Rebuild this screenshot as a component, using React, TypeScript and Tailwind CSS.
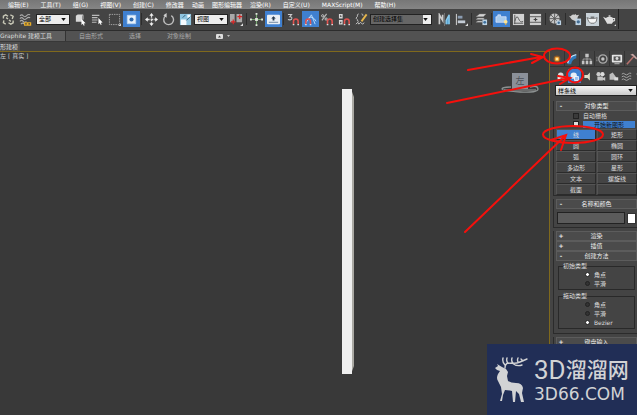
import type { ReactNode } from 'react';
import clsx from 'clsx';

const menus = [
  '编辑(E)', '工具(T)', '组(G)', '视图(V)', '创建(C)', '修改器', '动画',
  '图形编辑器', '渲染(R)', '自定义(U)', 'MAXScript(M)', '帮助(H)',
];

const shapeButtons = ['线', '矩形', '圆', '椭圆', '弧', '圆环', '多边形', '星形', '文本', '螺旋线', '截面'];

const magnet = (
  <>
    <path d="M7 12V9a2.5 2.5 0 0 1 5 0v3" fill="none" stroke="#e0524f" strokeWidth="1.7" />
    <path d="M6.2 12.5h1.7M11.2 12.5h1.7" stroke="#ddd" strokeWidth="1.4" />
  </>
);

const icons: Record<string, ReactNode> = {
  unlink: (
    <g fill="none" stroke="#c9c9b8" strokeWidth="1.5">
      <path d="M1.5 6V3.5L4 2l2.5 1.5M12 8v2.5L9.500 12 7 10.500M9 2l3 1.500-1 3M2 8l-.5 2.500L4 12M4.500 5l2 1.500M7.500 7.500l2 1.500" />
    </g>
  ),
  bind: (
    <>
      <path d="M1 3q2-2 3.500 0t3.500 0 4-1M1 6q2-2 3.500 0t3.500 0 4-1M1 9q2-2 3.500 0t3.500 0M2 12q2-2 4 0" fill="none" stroke="#aaa" strokeWidth="1.200" />
      <path d="M6 10.500h3v2.500H6zM9.500 10.500h3v2.500h-3z" fill="none" stroke="#e8ad28" strokeWidth="1.300" />
    </>
  ),
  pick: (
    <>
      <path d="M2 3l2-1.500h6L9 3.500v6H2z" fill="#d9d9d9" />
      <path d="M9 3.500l1.500-2V7H9z" fill="#999" />
      <path d="M8 6.500l4.500 4.500-2 .2 1 2-1 .5-1-2L8 13z" fill="#fff" />
    </>
  ),
  pickName: (
    <>
      <path d="M1 2.500h8M1 5h6M1 7.500h6M1 10h5" stroke="#bbb" strokeWidth="1.200" />
      <path d="M8 5.500l4.500 4.700-2 .2 1 2-1 .5-1-2L8 12z" fill="#fff" />
    </>
  ),
  region: (
    <>
      <path d="M1.500 1.500h11v11h-11z" fill="none" stroke="#aaa" strokeDasharray="1.500 1" />
      <path d="M14 11v3h-3z" fill="#ddd" />
    </>
  ),
  crossing: (
    <>
      <path d="M2.500 2.500h9v9h-9z" fill="#e8f2fb" stroke="#bcd7f2" />
      <circle cx="7" cy="7" r="2.200" fill="#2e69ad" />
    </>
  ),
  move: (
    <>
      <path d="M7 2v10M2 7h10" stroke="#ddd" strokeWidth="1.400" strokeDasharray="3 1" />
      <path d="M7 0l2.300 3H4.700zM7 14l2.300-3H4.700zM0 7l3-2.300v4.600zM14 7l-3-2.300v4.600z" fill="#f2f2f2" />
    </>
  ),
  rotate: (
    <>
      <path d="M4 3a5.300 5.300 0 1 0 6-.2" fill="none" stroke="#bdbdbd" strokeWidth="1.500" />
      <path d="M5 0v5L1.500 2.500z" fill="#d0d0d0" />
    </>
  ),
  scale: (
    <>
      <path d="M1 1h12v12H1z" fill="#8fc4df" />
      <path d="M2 7h6v6H2zM9 2h3v3H9z" fill="#f6fbff" />
      <path d="M4 5l3-3M8 8l4-4" stroke="#315d78" />
    </>
  ),
  pivot: (
    <>
      <path d="M0 1h5v9H0zM7 1h6v9H7z" fill="#a9a9a9" />
      <path d="M1 9.500h5M3.500 7v5M8 4h5M10.500 1.500v5" stroke="#d92525" strokeWidth="1.300" />
      <path d="M14 11v3h-3z" fill="#ddd" />
    </>
  ),
  manipulate: (
    <>
      <path d="M7 1v12M1 7h12" stroke="#77aa70" strokeWidth="1.200" />
      <path d="M5.500 5.500h3v3h-3zM6 0h2v2H6zM6 12h2v2H6zM0 6h2v2H0zM12 6h2v2h-2z" fill="#e0e6dc" />
    </>
  ),
  keyboard: (
    <>
      <rect x="0" y="2" width="14" height="10" rx="1" fill="#e9eff5" />
      <path d="M7 3.500L9.500 6H8v2H6V6H4.500z" fill="#25384d" />
      <path d="M2 10h10" stroke="#68809a" />
    </>
  ),
  snap3: (
    <>
      <path d="M1 1.500h4L3 4q3 0 2 2.500-1.500 1.500-4 .5" fill="none" stroke="#ccc" strokeWidth="1.100" />
      {magnet}
    </>
  ),
  snapAngle: (
    <>
      <path d="M1 12L8 2l4 10M5 5q5-2 8 4" fill="none" stroke="#bcdfff" />
      <g transform="translate(-5 0)">{magnet}</g>
    </>
  ),
  snapPercent: (
    <>
      <path d="M1 8l5-7" stroke="#bbb" strokeWidth="1.200" />
      <circle cx="1.800" cy="3" r="1.200" fill="none" stroke="#ccc" />
      <circle cx="5.500" cy="6.500" r="1.200" fill="none" stroke="#ccc" />
      {magnet}
    </>
  ),
  snapSpinner: (
    <>
      <path d="M1 1h4v5H1zM1 7.500h4v5H1z" fill="#d8d8d8" />
      <path d="M3 2l1 2H2zM3 11.500l1-2H2z" fill="#333" />
      {magnet}
    </>
  ),
  namedSets: (
    <>
      <path d="M4 1Q2 1 2.500 4L1 5.500 2.500 7Q2 9 4 9M7 1q2 0 1.500 2" fill="none" stroke="#c2c2c2" />
      <path d="M12.500 1.500L7 9" stroke="#e6b64c" strokeWidth="2" />
      <path d="M1 12l2-2 1 2 2-2 2 2 2-1.500" fill="none" stroke="#ccc" />
    </>
  ),
  mirror: (
    <>
      <path d="M1.500 12V2L5 8V2" fill="none" stroke="#ccc" strokeWidth="1.800" />
      <path d="M7 0v14" stroke="#777" />
      <path d="M12 12V2L8.800 8V12" fill="#5ba7d4" stroke="#8bcbed" strokeWidth="1.500" />
    </>
  ),
  align: (
    <>
      <path d="M1.500 1v12" stroke="#ddd" />
      <path d="M3 3h5v3H3z" fill="#8a9bb0" />
      <path d="M3 8h8v3H3z" fill="#c4ccd6" />
      <path d="M14 11v3h-3z" fill="#ddd" />
    </>
  ),
  layers: (
    <>
      <path d="M1 4l4-3h7L9 4zM1 7l2-1.500h7L9 7zM1 10l2-1.500h5V10z" fill="#d4d4d4" stroke="#777" strokeWidth=".5" />
      <path d="M8 7h5v6H8z" fill="#bcd3e5" />
      <circle cx="10.500" cy="10" r="1.500" fill="#3c6f9d" />
    </>
  ),
  ribbon: (
    <>
      <path d="M1 4h2V2h3v2h6v6H1z" fill="#a9cbed" stroke="#eef" strokeWidth=".7" />
      <circle cx="11.500" cy="9.500" r="2" fill="#ffe491" />
      <path d="M10.800 11.500h1.500V13h-1.500z" fill="#d9a542" />
    </>
  ),
  curves: (
    <>
      <path d="M1 1h12v12H1z" fill="#d2d2d2" />
      <path d="M3 2v10M2 11h10M3 9q2-8 4-3t5 3" fill="none" stroke="#555" />
    </>
  ),
  schematic: (
    <>
      <path d="M1 1h12v12H1z" fill="#cfcfcf" />
      <path d="M1 4h12M1 10h12" stroke="#555" />
      <path d="M7 5v4M5 7h4" stroke="#444" strokeWidth="1.300" />
    </>
  ),
  material: (
    <>
      <circle cx="6" cy="6" r="5.500" fill="#c4c4c4" />
      <path d="M2 2l8 8M6 0v12M0 6h12M10 2L2 10" stroke="#555" strokeWidth=".9" />
      <path d="M8 8h5v5H8z" fill="#bdd2e4" />
      <circle cx="10.500" cy="10.500" r="1.300" fill="#456e93" />
    </>
  ),
  renderSetup: (
    <>
      <path d="M0 3l2 .5Q3 1 6 2l1-1 1 1.500 3-.5-1.500 2Q9 8 7 9L3 7z" fill="#cfcfcf" />
      <path d="M7 6h6v7H7z" fill="#bdd2e4" />
      <circle cx="10" cy="9.500" r="1.800" fill="#456e93" />
    </>
  ),
  frameWindow: (
    <>
      <path d="M0 0h14v14H0z" fill="#c9d2d8" />
      <path d="M1 5l3 1h5l3-1-1 4-2 2H5L3 9z" fill="#f6f6f6" stroke="#555" strokeWidth=".8" />
      <path d="M5 4.500h4" stroke="#555" strokeWidth="1.200" />
    </>
  ),
  teapot: (
    <>
      <path d="M0 4l3 1.500Q5 4 7 4t4 1.500h2v3l-2 1-1.500 2h-5L3 9z" fill="#dedede" />
      <path d="M6 2.500h2V4H6z" fill="#dedede" />
      <path d="M11 6.500h1v1.300h-1z" fill="#444" />
      <path d="M14 12v2h-2z" fill="#ddd" />
    </>
  ),
  create: (
    <>
      <circle cx="7" cy="7" r="4" fill="#a9611d" opacity=".7" />
      <circle cx="7" cy="7" r="2.700" fill="#f5a93b" />
      <circle cx="7" cy="7" r="1.300" fill="#fff3b8" />
    </>
  ),
  modify: (
    <>
      <path d="M2 13Q3 4 12 2v4Q7 7 6 13z" fill="#2f79b8" />
      <path d="M2 12Q3 4 12 2" fill="none" stroke="#bfe2f7" strokeWidth="1.500" />
    </>
  ),
  hierarchy: (
    <>
      <path d="M5 1h4v4H5zM1 9h3v4H1zM5.500 9h3v4h-3zM10 9h3v4h-3z" fill="#c4c4c4" />
      <path d="M7 5v4M2.500 9V7h9v2" fill="none" stroke="#aaa" />
    </>
  ),
  motion: (
    <>
      <circle cx="8" cy="7" r="4.800" fill="none" stroke="#aaa" strokeWidth="1.600" />
      <circle cx="8" cy="7" r="2" fill="#c4c4c4" />
      <path d="M0 5h2M0 7h2M0 9h2" stroke="#888" />
    </>
  ),
  display: (
    <>
      <rect x="1" y="2" width="12" height="9" rx="1" fill="#e6e6e6" />
      <path d="M3 4h8v5H3z" fill="#555" />
      <circle cx="7" cy="6.500" r="1.700" fill="#ddd" />
      <path d="M4 12.500h6" stroke="#ccc" />
    </>
  ),
  utilities: (
    <>
      <path d="M1 13l8-9" stroke="#b5706c" strokeWidth="1.800" />
      <path d="M5 2l3-1 5 5-1 1.500-4-4z" fill="#c9a7a5" />
    </>
  ),
  geometry: (
    <>
      <circle cx="6" cy="5.500" r="3.500" fill="#ddd" />
      <path d="M7 7h6v5H7z" fill="#bbb" />
      <path d="M2 7h4v4H2z" fill="#e9e9e9" />
    </>
  ),
  shapes: (
    <>
      <circle cx="6" cy="6" r="4" fill="#e8eef5" />
      <path d="M7 7h5v5H7z" fill="#9dc2ee" stroke="#fff" />
    </>
  ),
  lights: <path d="M10 2v10L7 9H3V5h4z" fill="#dcdcc8" />,
  cameras: (
    <>
      <circle cx="4.500" cy="4" r="2.700" fill="#ccc" />
      <circle cx="9.500" cy="4" r="2.700" fill="#ddd" />
      <path d="M3 7h7v5H3zM10 9l3-1.500v5L10 11z" fill="#c4c4c4" />
    </>
  ),
  helpers: (
    <>
      <path d="M2 11V4l4-2 5 7v2z" fill="#bdbdbd" />
      <path d="M8 8h5v4H8z" fill="#ddd" />
    </>
  ),
  spacewarps: (
    <path d="M1 4q2-2 4 0t4 0 4-1M1 7.500q2-2 4 0t4 0 4-1M1 11q2-2 4 0t4 0 4-1" fill="none" stroke="#aaa" strokeWidth="1.200" />
  ),
  systems: <path d="M3 3l4 2 5-2-2 4 2 3-4-1-2 4-1-4z" fill="#ccc" />,
};

function IconButton({ name, label, active, size = 'bar' }: { name: string; label: string; active?: boolean; size?: 'bar' | 'tab' | 'sub' }) {
  return (
    <button
      type="button"
      aria-label={label}
      aria-pressed={active}
      className={clsx(
        'flex shrink-0 items-center justify-center',
        size === 'bar' && 'h-4 w-[17px]',
        size === 'tab' && 'h-4 w-[15px] border-r border-[#333]',
        size === 'sub' && 'h-[14px] w-[13px]',
        active && 'bg-[#3f80d0]',
      )}
    >
      <svg viewBox="0 0 14 14" className={size === 'bar' ? 'size-[13px]' : size === 'tab' ? 'size-3' : 'size-[11px]'}>
        {icons[name]}
      </svg>
    </button>
  );
}

function Divider() {
  return <span className="mx-px h-3 w-px shrink-0 bg-[#2c2c2c]" />;
}

function DropDown({ label, value, className }: { label: string; value: string; className: string }) {
  return (
    <div className={clsx('relative shrink-0', className)}>
      <select
        aria-label={label}
        className="block h-full w-full appearance-none overflow-hidden border border-[#222] bg-transparent pl-0.5 leading-[8px] text-black"
      >
        <option>{value}</option>
      </select>
      <svg viewBox="0 0 6 4" className="pointer-events-none absolute top-1 right-1 h-[3px] w-[5px]">
        <path d="M0 0h6L3 4z" fill="#111" />
      </svg>
    </div>
  );
}

function Toolbar() {
  return (
    <div className="flex h-[22px] items-center border-b border-[#2c2c2c] bg-[#444] pb-px">
      <IconButton name="unlink" label="断开链接" />
      <IconButton name="bind" label="绑定到空间扭曲" />
      <DropDown label="选择过滤器" value="全部" className="mx-0.5 h-[11px] w-[34px] bg-[#ededed]" />
      <IconButton name="pick" label="选择对象" />
      <IconButton name="pickName" label="按名称选择" />
      <IconButton name="region" label="矩形选择区域" />
      <IconButton name="crossing" label="窗口/交叉" active />
      <Divider />
      <IconButton name="move" label="移动" />
      <IconButton name="rotate" label="旋转" />
      <IconButton name="scale" label="缩放" />
      <DropDown label="参考坐标系" value="视图" className="h-[11px] w-[34px] bg-[#ededed]" />
      <IconButton name="pivot" label="轴点中心" />
      <Divider />
      <IconButton name="manipulate" label="操纵" />
      <IconButton name="keyboard" label="键盘快捷键" active />
      <Divider />
      <IconButton name="snap3" label="捕捉开关" />
      <IconButton name="snapAngle" label="角度捕捉" active />
      <IconButton name="snapPercent" label="百分比捕捉" />
      <IconButton name="snapSpinner" label="微调器捕捉" />
      <IconButton name="namedSets" label="编辑命名选择集" />
      <DropDown
        label="命名选择集"
        value="创建选择集"
        className="mr-1 h-[11px] w-[62px] bg-linear-to-r from-[#666] from-85% to-[#eee] to-85%"
      />
      <IconButton name="mirror" label="镜像" />
      <IconButton name="align" label="对齐" />
      <Divider />
      <IconButton name="layers" label="层管理器" />
      <Divider />
      <IconButton name="ribbon" label="石墨建模工具" active />
      <IconButton name="curves" label="曲线编辑器" />
      <IconButton name="schematic" label="图解视图" />
      <Divider />
      <IconButton name="material" label="材质编辑器" />
      <Divider />
      <IconButton name="renderSetup" label="渲染设置" />
      <IconButton name="frameWindow" label="渲染帧窗口" />
      <IconButton name="teapot" label="渲染产品" />
      <span className="h-full w-px bg-[#222]" />
    </div>
  );
}

function Ribbon() {
  return (
    <>
      <div className="flex h-[10px] items-stretch bg-[#525252] text-[#aaa]">
        <button type="button" className="border-r border-[#333] bg-[#5e5e5e] pr-[13px] text-[#ddd]">Graphite 建模工具</button>
        <button type="button" className="px-[13px]">自由形式</button>
        <button type="button" className="px-[13px]">选择</button>
        <button type="button" className="px-[13px]">对象绘制</button>
        <button type="button" aria-label="最小化" className="ml-3 flex items-center gap-1">
          <svg viewBox="0 0 7 5" className="h-[5px] w-[7px]">
            <rect width="7" height="5" rx="1" fill="#ddd" />
            <path d="M2 3.500h3L3.500 1.500z" fill="#444" />
          </svg>
          <svg viewBox="0 0 3 2" className="h-0.5 w-[3px]">
            <path d="M0 0h3L1.500 2z" fill="#bbb" />
          </svg>
        </button>
      </div>
      <div className="flex h-[10px] items-stretch border-t border-[#383838] bg-[#414141] text-[#ddd]">
        <button type="button" className="bg-[#4d4d4d] pr-0.5">形建模</button>
      </div>
    </>
  );
}

function Viewport() {
  return (
    <main className="relative min-w-0 flex-1 border-t border-r border-[#80691c] bg-[#393939]">
      <p className="text-[#ccc]">左 [ 真实 ]</p>
      {/* thin box seen from the left */}
      <svg viewBox="0 0 12 285" className="absolute top-[37px] left-[342px] h-[285px] w-3">
        <path d="M9 0l3 8v269l-3 8z" fill="#aaa9a3" />
        <path d="M0 0h10v285H0z" fill="#efefef" />
      </svg>
      {/* view cube */}
      <svg viewBox="0 0 38 22" className="absolute top-5 right-[10px] h-[22px] w-[38px]">
        <path d="M10 15Q1 15 1 17t18 3 18-3-8-2" fill="none" stroke="#8d9292" strokeWidth="1.300" />
        <path d="M11 1h16v16H11z" fill="#8b9099" />
        <path d="M3 18h32" stroke="#b4b8b8" strokeWidth=".8" />
        <text x="19" y="12" textAnchor="middle" fontSize="9" fill="#4b5058">左</text>
      </svg>
    </main>
  );
}

function Rollout({ title, open, children }: { title: string; open?: boolean; children?: ReactNode }) {
  return (
    <section className={clsx('border-l border-[#2b2b2b] pl-0.5', open && 'border-b')}>
      <button
        type="button"
        aria-expanded={!!open}
        className="flex h-[10px] w-full items-center border border-[#5c5c5c] bg-[#4b4b4b] text-[#eee]"
      >
        <span className="w-2 font-bold">{open ? '-' : '+'}</span>
        <span className="flex-1 pr-2 text-center">{title}</span>
      </button>
      {children}
    </section>
  );
}

function RadioGroup({ title, name, options, value }: { title: string; name: string; options: string[]; value: string }) {
  return (
    <fieldset className="mx-0.5 border border-[#292929] pb-px">
      <legend className="ml-1 leading-[8px]">{title}</legend>
      {options.map((option) => (
        <label key={option} className="ml-[26px] flex h-[9px] items-center gap-1">
          <input
            type="radio"
            name={name}
            defaultChecked={option === value}
            className="size-[5px] appearance-none rounded-full border border-[#222] bg-[#333] checked:bg-white"
          />
          {option}
        </label>
      ))}
    </fieldset>
  );
}

function CommandPanel() {
  return (
    <aside className="w-[87px] shrink-0 overflow-hidden bg-[#444] text-[#ddd]">
      <div className="flex h-4 border-b border-[#333]">
        <IconButton size="tab" name="create" label="创建" />
        <IconButton size="tab" name="modify" label="修改" />
        <IconButton size="tab" name="hierarchy" label="层次" />
        <IconButton size="tab" name="motion" label="运动" />
        <IconButton size="tab" name="display" label="显示" />
        <IconButton size="tab" name="utilities" label="实用程序" />
      </div>
      <div className="mt-0.5 flex h-[14px] pl-[5px]">
        <IconButton size="sub" name="geometry" label="几何体" />
        <IconButton size="sub" name="shapes" label="图形" active />
        <IconButton size="sub" name="lights" label="灯光" />
        <IconButton size="sub" name="cameras" label="摄影机" />
        <IconButton size="sub" name="helpers" label="辅助对象" />
        <IconButton size="sub" name="spacewarps" label="空间扭曲" />
        <IconButton size="sub" name="systems" label="系统" />
      </div>
      <DropDown label="图形类别" value="样条线" className="mt-0.5 ml-[5px] h-[11px] bg-linear-to-b from-[#fafafa] to-[#c5c5c5]" />

      <div className="mt-[5px] ml-[3px] flex flex-col gap-[3px]">
        <Rollout title="对象类型" open>
          <div className="flex flex-col pt-px pb-px pl-[17px]">
            <label className="flex h-2 items-center gap-1">
              <input type="checkbox" className="size-[6px] appearance-none border border-[#222] bg-[#3a3a3a]" />
              自动栅格
            </label>
            <label className="flex h-2 items-center gap-1">
              <input type="checkbox" defaultChecked className="size-[6px] appearance-none border border-[#222] bg-[#3a3a3a] checked:bg-[#ddd]" />
              <span className="mr-0.5 h-[7px] flex-1 bg-[#3f80d0] text-center leading-[7px] text-[#111]">开始新图形</span>
            </label>
          </div>
          <div className="grid grid-cols-2 gap-x-px">
            {shapeButtons.map((shape) => (
              <button
                key={shape}
                type="button"
                className={clsx(
                  'h-[11px] border border-t-[#555] border-r-[#2b2b2b] border-b-[#2b2b2b] border-l-[#555]',
                  shape === '线' && 'bg-[#3f80d0]',
                )}
              >
                {shape}
              </button>
            ))}
            <span className="border border-t-[#555] border-r-[#2b2b2b] border-b-[#2b2b2b] border-l-[#555]" />
          </div>
        </Rollout>

        <Rollout title="名称和颜色" open>
          <div className="flex items-center gap-0.5 px-px py-[3px]">
            <input aria-label="名称" className="h-3 min-w-0 flex-1 border border-[#222] bg-[#5b5b5b] px-0.5" />
            <button type="button" aria-label="颜色" className="h-[11px] w-[9px] border border-[#333] bg-white" />
          </div>
        </Rollout>

        <div className="flex flex-col">
          <Rollout title="渲染" />
          <Rollout title="插值" />
          <Rollout title="创建方法" open>
            <div className="flex flex-col gap-0.5 pt-px pb-1">
              <RadioGroup title="初始类型" name="initial" options={['角点', '平滑']} value="角点" />
              <RadioGroup title="拖动类型" name="drag" options={['角点', '平滑', 'Bezier']} value="Bezier" />
            </div>
          </Rollout>
        </div>

        <Rollout title="键盘输入" />
      </div>
    </aside>
  );
}

// red ellipses and arrows pointing at the create tab, the shapes button and the line tool
function Annotations() {
  return (
    <svg viewBox="0 0 200 240" className="pointer-events-none absolute top-0 right-0 h-[240px] w-[200px]" fill="none" stroke="#f5100c" strokeWidth="2" strokeLinecap="round">
      <ellipse cx="120" cy="56" rx="13" ry="7.500" />
      <ellipse cx="138" cy="75" rx="8" ry="7.500" />
      <ellipse cx="136" cy="134.500" rx="30" ry="8.500" />
      <path d="M31 70L104 57M94 54l12 3-11 6" />
      <path d="M10 103L132 78M121 76l12 2-10 6" />
      <path d="M28 232L128 136M114 140l15-5-5 15" />
    </svg>
  );
}

function Watermark() {
  return (
    <div className="absolute right-0 bottom-0 flex h-[71px] w-[150px] items-center gap-[5px] bg-[#212e56] pl-2 text-[#d2d3d5]">
      <svg viewBox="0 0 34 46" className="h-[46px] w-[34px] shrink-0" fill="#d2d3d5">
        <path d="M2 7l5 3 4 2 2 3-1 4 1 5q3 2 8 2 6 0 7 5l-1 5 2 9h-3l-2-8-3-3-1 11h-2l-1-11q-4-1-7-1l-2 5-1 6H5l2-7-1-7-3-6q-2-3 0-7l2-3-3-1-2-2 3-2z" />
        <path d="M10 11q0-4 3-5 8 1 12-1l7-3M10 8Q7 5 8 1M13 6q-2-2-1-5M18 6q-2-2-1-5M23 5q-1-2 0-4M17 6q5 4 10 2M28 4l-2-2" fill="none" stroke="#d2d3d5" strokeWidth="1.400" strokeLinecap="round" />
      </svg>
      <div className="whitespace-nowrap">
        <p className="flex items-center font-['Roboto','Noto_Sans_CJK_SC',sans-serif] leading-[28px]">
          <span className="text-[26px]">3D</span>
          <span className="text-[21px] font-medium">溜溜网</span>
        </p>
        <p className="text-[17px] leading-[20px]">3D66.COM</p>
      </div>
    </div>
  );
}

export default function App() {
  return (
    <div className="relative flex h-screen flex-col overflow-hidden bg-[#393939] font-['DejaVu_Sans','Noto_Sans_CJK_SC',sans-serif] text-[6px] leading-[8px] whitespace-nowrap">
      <nav className="flex h-[9px] shrink-0 bg-linear-to-b from-[#777] to-[#858585] pl-2 text-white">
        {menus.map((menu) => (
          <button key={menu} type="button" className={menu.endsWith(')') ? 'pr-3' : 'pr-2'}>
            {menu}
          </button>
        ))}
      </nav>
      <Toolbar />
      <Ribbon />
      <div className="flex min-h-0 flex-1">
        <Viewport />
        <CommandPanel />
      </div>
      <Annotations />
      <Watermark />
    </div>
  );
}
